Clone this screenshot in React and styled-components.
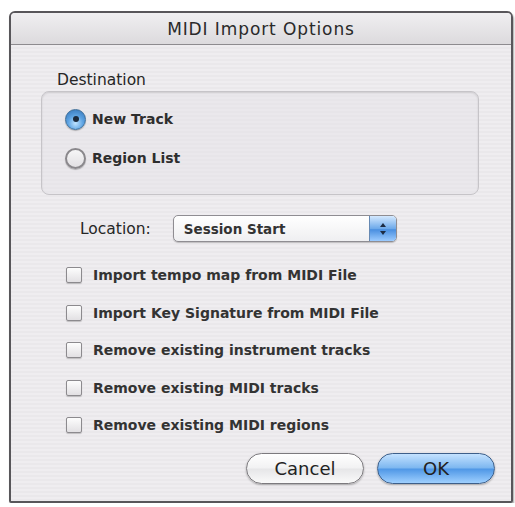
import React, { useState } from 'react'
import styled, { createGlobalStyle } from 'styled-components'

const Global = createGlobalStyle`
    html, body {
        margin: 0;
        padding: 0;
        background: #fff;
    }
    body {
        font-family: "DejaVu Sans", "Liberation Sans", sans-serif;
        color: #262626;
    }
`;

const Window = styled.div`
    margin: 11px 0 0 9px;
    width: 500px;
    height: 488px;
    border: 2px solid #58565a;
    border-radius: 6px 6px 2px 2px;
    box-shadow: 1px 2px 2px rgba(0,0,0,0.35);
    background: repeating-linear-gradient(
        to bottom,
        #efedf0 0px,
        #efedf0 2px,
        #eae8eb 2px,
        #eae8eb 4px
    );
    display: flex;
    flex-direction: column;
    overflow: hidden;
`;

const TitleBar = styled.div`
    height: 31px;
    flex-shrink: 0;
    display: flex;
    align-items: center;
    justify-content: center;
    background: linear-gradient(to bottom, #f0eff1, #dcdadd);
    border-bottom: 1px solid #8d8b8f;
    font-size: 17px;
    color: #2a2a2a;
    letter-spacing: 0.9px;
`;

const Body = styled.div`
    flex: 1;
    display: flex;
    flex-direction: column;
    padding: 26px 32px 0 30px;
`;

const GroupLabel = styled.div`
    font-size: 15.5px;
    line-height: 18px;
    margin: 0 0 2px 16px;
`;

const GroupBox = styled.div`
    height: 104px;
    border: 1px solid #c6c4c8;
    border-radius: 8px;
    background: rgba(228, 226, 230, 0.45);
    box-shadow: inset 0 1px 2px rgba(0,0,0,0.12);
    display: flex;
    flex-direction: column;
    gap: 17px;
    padding: 16px 0 0 23px;
    box-sizing: border-box;
`;

const OptionRow = styled.label`
    display: flex;
    align-items: center;
    gap: 6px;
    font-size: 14px;
    font-weight: bold;
    color: #2e2e2e;
    height: 22px;
`;

const Radio = styled.span`
    width: 21px;
    height: 21px;
    border-radius: 50%;
    box-sizing: border-box;
    display: flex;
    align-items: center;
    justify-content: center;
    border: ${p => (p.$on ? '1px solid #3c6e99' : '2px solid #8a888c')};
    background: ${p => (p.$on
        ? 'radial-gradient(circle at 50% 70%, #bfe3ff 0%, #5ea4e3 45%, #2f6fb4 100%)'
        : 'linear-gradient(to bottom, #f6f6f7, #e2e0e3)')};
    box-shadow: 0 1px 1px rgba(0,0,0,0.25);
    &::after {
        content: '';
        width: 6px;
        height: 6px;
        border-radius: 50%;
        background: #1c2a3c;
        display: ${p => (p.$on ? 'block' : 'none')};
    }
`;

const LocationRow = styled.div`
    display: flex;
    align-items: center;
    margin: 20px 0 0 39px;
    gap: 22px;
    font-size: 15.5px;
`;

const Select = styled.div`
    width: 224px;
    height: 27px;
    box-sizing: border-box;
    border: 1px solid #8f8d92;
    border-radius: 5px;
    background: linear-gradient(to bottom, #ffffff, #efeff1);
    box-shadow: 0 1px 1px rgba(0,0,0,0.2);
    display: flex;
    align-items: center;
    overflow: hidden;
    font-weight: bold;
    font-size: 13.5px;
    color: #333;
`;

const SelectText = styled.span`
    flex: 1;
    padding-left: 10px;
`;

const Stepper = styled.span`
    width: 26px;
    height: 100%;
    background: linear-gradient(to bottom, #d4e9ff 0%, #6eaaea 50%, #4a8fe0 55%, #9ccbff 100%);
    border-left: 1px solid #6689b3;
    display: flex;
    align-items: center;
    justify-content: center;
`;

const Checks = styled.div`
    display: flex;
    flex-direction: column;
    gap: 17.5px;
    margin: 23px 0 0 25px;
`;

const Box = styled.span`
    width: 14px;
    height: 14px;
    border: 1px solid #8c8a8e;
    border-radius: 2px;
    background: linear-gradient(to bottom, #fdfdfd, #e2e0e3);
    box-shadow: 0 1px 1px rgba(0,0,0,0.2);
`;

const CheckRow = styled(OptionRow)`
    gap: 11px;
    height: 20px;
    color: #333;
`;

const Buttons = styled.div`
    display: flex;
    justify-content: flex-end;
    gap: 13px;
    margin-top: 18px;
    margin-right: -16px;
`;

const Button = styled.button`
    width: 118px;
    height: 31px;
    border-radius: 16px;
    font-family: inherit;
    font-size: 18px;
    color: #222;
    border: 1px solid ${p => (p.$primary ? '#3d5f8a' : '#7c7a7e')};
    background: ${p => (p.$primary
        ? 'linear-gradient(to bottom, #c4e2ff 0%, #7db7f0 48%, #4f97e6 52%, #9fd0ff 100%)'
        : 'linear-gradient(to bottom, #ffffff 0%, #f2f2f3 48%, #e6e6e8 52%, #fafafa 100%)')};
    box-shadow: 0 1px 2px rgba(0,0,0,0.3);
    padding: 0;
`;

const checkOptions = [
    'Import tempo map from MIDI File',
    'Import Key Signature from MIDI File',
    'Remove existing instrument tracks',
    'Remove existing MIDI tracks',
    'Remove existing MIDI regions',
]

function App() {
    const [dest] = useState('track')

    return (
        <>
            <Global />
            <Window>
                <TitleBar>MIDI Import Options</TitleBar>
                <Body>
                    <GroupLabel>Destination</GroupLabel>
                    <GroupBox>
                        <OptionRow><Radio $on={dest === 'track'} />New Track</OptionRow>
                        <OptionRow><Radio $on={dest === 'list'} />Region List</OptionRow>
                    </GroupBox>

                    <LocationRow>
                        <span>Location:</span>
                        <Select>
                            <SelectText>Session Start</SelectText>
                            <Stepper>
                                <svg width="8" height="14" viewBox="0 0 8 14">
                                    <path d="M4 1 L7 5 L1 5 Z" fill="#1d2c44" />
                                    <path d="M4 13 L7 9 L1 9 Z" fill="#1d2c44" />
                                </svg>
                            </Stepper>
                        </Select>
                    </LocationRow>

                    <Checks>
                        {checkOptions.map((text, i) => (
                            <CheckRow key={i}><Box />{text}</CheckRow>
                        ))}
                    </Checks>

                    <Buttons>
                        <Button>Cancel</Button>
                        <Button $primary>OK</Button>
                    </Buttons>
                </Body>
            </Window>
        </>
    )
}

export default App
